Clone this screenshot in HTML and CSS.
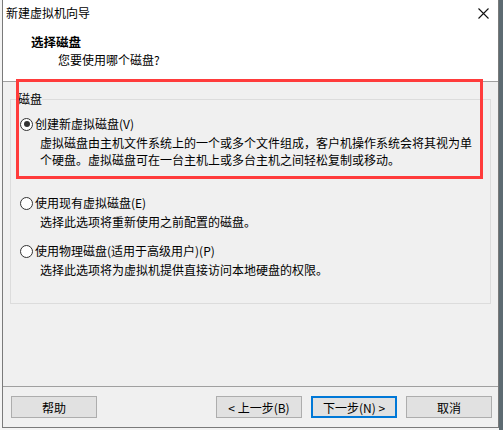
FILE: index.html
```html
<!DOCTYPE html>
<html lang="zh-CN">
<head>
<meta charset="utf-8">
<title>新建虚拟机向导</title>
<link rel="stylesheet" href="styles.css">
</head>
<body>
<div class="window">
  <div class="top">
    <div class="titlebar">
      <span class="title">新建虚拟机向导</span>
      <svg class="close" width="11" height="11" viewBox="0 0 11 11"><path d="M0.5 0.5L10.5 10.5M10.5 0.5L0.5 10.5" stroke="#111" stroke-width="1.1" fill="none"/></svg>
    </div>
    <div class="header">
      <div class="h-title">选择磁盘</div>
      <div class="h-sub">您要使用哪个磁盘?</div>
    </div>
  </div>
  <div class="content">
    <fieldset class="group">
      <legend>磁盘</legend>
      <div class="option opt1">
        <div class="opt-label"><span class="radio checked"></span>创建新虚拟磁盘(V)</div>
        <div class="opt-desc">虚拟磁盘由主机文件系统上的一个或多个文件组成，客户机操作系统会将其视为单<br>个硬盘。虚拟磁盘可在一台主机上或多台主机之间轻松复制或移动。</div>
      </div>
      <div class="option opt2">
        <div class="opt-label"><span class="radio"></span>使用现有虚拟磁盘(E)</div>
        <div class="opt-desc">选择此选项将重新使用之前配置的磁盘。</div>
      </div>
      <div class="option opt3">
        <div class="opt-label"><span class="radio"></span>使用物理磁盘(适用于高级用户)(P)</div>
        <div class="opt-desc">选择此选项将为虚拟机提供直接访问本地硬盘的权限。</div>
      </div>
    </fieldset>
  </div>
  <div class="buttons">
    <button class="btn">帮助</button>
    <div class="spacer"></div>
    <button class="btn">&lt; 上一步(B)</button>
    <button class="btn default">下一步(N) &gt;</button>
    <button class="btn">取消</button>
  </div>
  <div class="highlight"></div>
</div>
</body>
</html>
```

FILE: styles.css
```css
html, body {
  margin: 0;
  padding: 0;
}
body {
  width: 503px;
  height: 430px;
  overflow: hidden;
  background: linear-gradient(to right, #f4f4f4 499px, #5d6b72 499px);
  font-family: "Noto Sans CJK SC", "Noto Sans", sans-serif;
  font-size: 12px;
  color: #000;
}
.window {
  position: relative;
  margin-left: 2px;
  width: 497px;
  height: 428px;
  box-sizing: border-box;
  border: 1px solid #7a7a7a;
  border-top: none;
  background: #f0f0f0;
  display: flex;
  flex-direction: column;
}
.top {
  background: #fff;
  height: 81px;
  border-bottom: 1px solid #a0a0a0;
  display: flex;
  flex-direction: column;
}
.titlebar {
  height: 26px;
  display: flex;
  align-items: center;
  justify-content: space-between;
  padding: 0 9px 0 3px;
}
.title {
  line-height: 26px;
}
.close {
  display: block;
  margin-top: 1px;
}
.header {
  padding-top: 8px;
}
.h-title {
  font-weight: bold;
  line-height: 16px;
  padding-left: 28px;
  font-size: 12.5px;
}
.h-sub {
  line-height: 16px;
  margin-top: 2px;
  padding-left: 55px;
}
.content {
  height: 305px;
  border-bottom: 1px solid #a0a0a0;
  box-sizing: border-box;
  padding: 9px 0 0 7px;
}
.group {
  margin: 0;
  padding: 9px 0 0 0;
  width: 481px;
  height: 213px;
  box-sizing: border-box;
  border: 1px solid #dcdcdc;
  min-width: 0;
}
.group legend {
  padding: 0;
  margin-left: 7px;
  line-height: 16px;
}
.option {
  display: flex;
  flex-direction: column;
}
.opt2 {
  margin-top: 27px;
}
.opt3 {
  margin-top: 13px;
}
.opt-label {
  display: flex;
  align-items: center;
  line-height: 16px;
  padding-left: 9px;
}
.radio {
  width: 13px;
  height: 13px;
  box-sizing: border-box;
  border: 1px solid #333;
  border-radius: 50%;
  background: #fff;
  margin-right: 2px;
  position: relative;
  flex: none;
}
.radio.checked::after {
  content: "";
  position: absolute;
  left: 2.5px;
  top: 2.5px;
  width: 6px;
  height: 6px;
  border-radius: 50%;
  background: #333;
}
.opt-desc {
  margin-top: 2px;
  padding-left: 29px;
  line-height: 17px;
  white-space: nowrap;
}
.buttons {
  display: flex;
  align-items: flex-start;
  padding: 9px 6px 0 8px;
  gap: 9px;
}
.spacer {
  flex: 1;
}
.btn {
  width: 86px;
  height: 22px;
  box-sizing: border-box;
  border: 1px solid #adadad;
  background: #e1e1e1;
  font-family: inherit;
  font-size: 12px;
  color: #000;
  padding: 0;
  margin: 0;
}
.btn.default {
  border: 2px solid #0078d7;
}
.highlight {
  position: absolute;
  left: 13px;
  top: 79px;
  width: 467px;
  height: 100px;
  box-sizing: border-box;
  border: 3px solid #ff3b3b;
  pointer-events: none;
}
```
